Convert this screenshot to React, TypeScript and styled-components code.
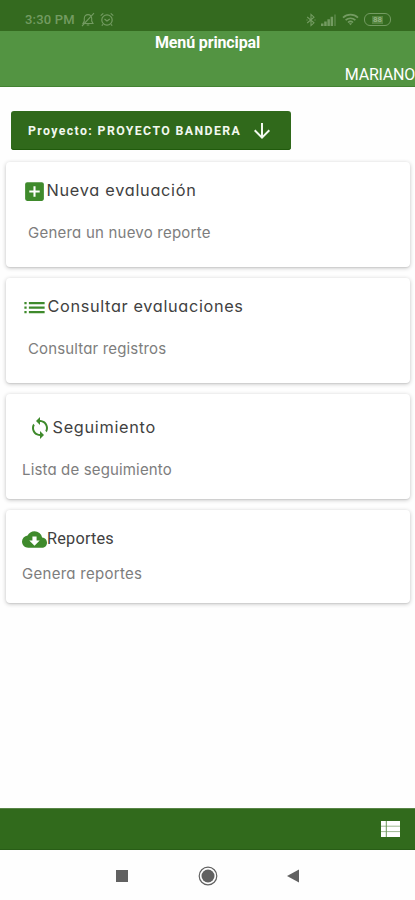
import React from "react";
import styled, { createGlobalStyle } from "styled-components";
import {
  MdAddBox,
  MdArrowDownward,
  MdCloudDownload,
  MdList,
  MdLoop,
} from "react-icons/md";

const GlobalStyle = createGlobalStyle`
  * { box-sizing: border-box; }
  body { margin: 0; background: #fefefe; }
`;

const Screen = styled.div`
  display: flex;
  flex-direction: column;
  width: 415px;
  height: 900px;
  overflow: hidden;
  background: #fefefe;
  font-family: Roboto, sans-serif;
`;

const StatusBar = styled.div`
  display: flex;
  justify-content: space-between;
  height: 31px;
  padding: 9px 24px 0 25px;
  background: #346a1f;
  color: #739b61;
`;

const StatusGroup = styled.div<{ $gap: number }>`
  display: flex;
  align-items: center;
  gap: ${(p) => p.$gap}px;
  height: 21px;
  svg { display: block; }
`;

const Clock = styled.span`
  font-size: 13px;
  line-height: 20px;
  font-weight: 500;
  letter-spacing: 0.2px;
  margin-right: 1px;
`;

const Header = styled.header`
  display: flex;
  flex-direction: column;
  justify-content: space-between;
  height: 56px;
  padding: 2px 0 1px;
  background: #539442;
  border-bottom: 1px solid #438232;
  color: #fff;
`;

const Title = styled.h1`
  margin: 0;
  font-size: 16px;
  line-height: 20px;
  font-weight: 700;
  letter-spacing: -0.13px;
  text-align: center;
`;

const UserName = styled.div`
  font-size: 16px;
  line-height: 20px;
  letter-spacing: -0.22px;
  text-align: right;
`;

const Content = styled.main`
  display: flex;
  flex: 1;
  flex-direction: column;
  align-items: flex-start;
  padding: 24px 5px 0 6px;
`;

const ProjectButton = styled.button`
  display: flex;
  align-items: center;
  justify-content: space-between;
  width: 280px;
  height: 39px;
  margin: 0 0 12px 5px;
  padding: 1px 17px 0 17px;
  border: 0;
  border-radius: 3px;
  background: #30691b;
  box-shadow: inset 0 -1px 0 #205a0c;
  color: #f2f8ef;
  font: 700 12.3px/20px Roboto, sans-serif;
  letter-spacing: 1.39px;
  white-space: nowrap;
`;

const CardList = styled.div`
  display: flex;
  flex-direction: column;
  gap: 11px;
  width: 100%;
`;

const Card = styled.section<{ $height: number }>`
  height: ${(p) => p.$height}px;
  border-radius: 4px;
  background: #fff;
  box-shadow: 0 1px 4px rgba(0, 0, 0, 0.24), 0 1px 1px rgba(0, 0, 0, 0.06);
`;

const CardHeading = styled.div<{ $top: number; $left: number; $gap: number }>`
  display: flex;
  align-items: center;
  gap: ${(p) => p.$gap}px;
  padding: ${(p) => p.$top}px 0 0 ${(p) => p.$left}px;
  height: ${(p) => p.$top + 24}px;
  svg { flex: none; color: #3f8a2c; }
`;

const CardTitle = styled.h2<{ $spacing: number; $roboto?: boolean }>`
  margin: ${(p) => (p.$roboto ? 0 : -2)}px 0 0 ${(p) => p.$roboto ? 0 : -0.5}px;
  color: #414141;
  font: 400 16.3px/24px ${(p) => (p.$roboto ? "Roboto" : "Inter")}, sans-serif;
  font-feature-settings: "cv11";
  letter-spacing: ${(p) => p.$spacing}px;
  white-space: nowrap;
`;

const CardText = styled.p<{ $top: number; $left: number; $spacing: number }>`
  margin: ${(p) => p.$top}px 0 0 ${(p) => p.$left}px;
  color: #7d7d7d;
  font: 400 15px/22px Inter, sans-serif;
  font-feature-settings: "cv11";
  letter-spacing: ${(p) => p.$spacing}px;
  white-space: nowrap;
`;

const BottomBar = styled.footer`
  display: flex;
  align-items: center;
  justify-content: flex-end;
  height: 42px;
  padding-right: 15px;
  background: #316a1c;
  border-top: 1px solid #588447;
  border-bottom: 1px solid #285d16;
  color: #fff;
`;

const NavBar = styled.nav`
  display: flex;
  align-items: center;
  justify-content: space-between;
  height: 50px;
  padding: 1px 115px 0;
  background: #fefefe;
  color: #616161;
  svg { display: block; }
`;

const MutedBell = () => (
  <svg width="14" height="15" viewBox="0 0 14 15" fill="none" stroke="currentColor" strokeWidth="1.1">
    <path d="M2 11.5h10L10.7 9V6.5C10.7 4 9.2 2.6 7 2.6S3.3 4 3.3 6.5V9L2 11.5zM5.7 13h2.6M1 14 13 1.2" />
  </svg>
);

const AlarmClock = () => (
  <svg width="14" height="15" viewBox="0 0 14 15" fill="none" stroke="currentColor" strokeWidth="1.2">
    <circle cx="7" cy="8" r="5.2" />
    <path d="M4.5 7 7 9l2.8-2M.7 3.6 3.3 1.4M13.3 3.6l-2.6-2.2M3 12.3l-1.2 1.4M11 12.3l1.2 1.4" />
  </svg>
);

const Bluetooth = () => (
  <svg width="10" height="14" viewBox="0 0 10 14" fill="none" stroke="currentColor" strokeWidth="1.1">
    <path d="M1.2 4 8 9.8 5 12.6V1.4L8 4.2 1.2 10" />
    <path d="M.5 7h1M8.5 7h1" />
  </svg>
);

const Signal = () => (
  <svg width="16" height="12" viewBox="0 0 16 12" fill="currentColor">
    <path d="M0 9.5h2.5V12H0zM3.2 7.5h2.5V12H3.2zM6.4 5.2h2.5V12H6.4zM9.6 2.8h2.5V12H9.6z" />
    <path d="M13 .5h2V12h-2z" opacity=".45" />
  </svg>
);

const Wifi = () => (
  <svg width="17" height="13" viewBox="0 0 17 13" fill="none" stroke="currentColor" strokeWidth="1.7">
    <path d="M1 4.6C5.2.7 11.8.7 16 4.6M3.6 7.2c2.8-2.6 7-2.6 9.8 0M6 9.5c1.4-1.3 3.6-1.3 5 0" />
    <path d="m6.8 10.3 1.7 2 1.7-2z" fill="currentColor" stroke="none" />
  </svg>
);

const ListIcon = () => (
  <svg width="19" height="16" viewBox="0 0 19 16">
    <path d="M0 0h19v16H0z" fill="#fff" />
    <path d="M0 5.2h19M0 10.6h19" stroke="#9db892" strokeWidth="1" />
    <path d="M5.3 0v16" stroke="#6b9659" strokeWidth="1" />
  </svg>
);

const BatteryShell = styled.span`
  display: flex;
  align-items: center;
  justify-content: center;
  width: 27px;
  height: 13px;
  border: 1px solid currentColor;
  border-radius: 6px;
`;

const BatteryLevel = styled.span`
  display: block;
  padding: 0 1px;
  background: #55863f;
  color: #92b281;
  font: 700 8px/8px Roboto, sans-serif;
`;

const cards = [
  {
    height: 105, icon: <MdAddBox size={25} />, top: 17, left: 16, gap: 0,
    title: "Nueva evaluación", spacing: 0.72,
    text: "Genera un nuevo reporte", textTop: 19, textLeft: 22, textSpacing: 0.22,
  },
  {
    height: 105, icon: <MdList size={27} />, top: 17, left: 15, gap: -1,
    title: "Consultar evaluaciones", spacing: 0.65,
    text: "Consultar registros", textTop: 19, textLeft: 22, textSpacing: 0.15,
  },
  {
    height: 105, icon: <MdLoop size={24} />, top: 22, left: 22, gap: 1,
    title: "Seguimiento", spacing: 0.7,
    text: "Lista de seguimiento", textTop: 19, textLeft: 16, textSpacing: 0.15,
  },
  {
    height: 93, icon: <MdCloudDownload size={25} />, top: 17, left: 16, gap: 0,
    title: "Reportes", spacing: 0.2, roboto: true,
    text: "Genera reportes", textTop: 12, textLeft: 16, textSpacing: 0.28,
  },
];

export default function App() {
  return (
    <Screen>
      <GlobalStyle />
      <StatusBar>
        <StatusGroup $gap={5}>
          <Clock>3:30 PM</Clock>
          <MutedBell />
          <AlarmClock />
        </StatusGroup>
        <StatusGroup $gap={5}>
          <Bluetooth />
          <Signal />
          <Wifi />
          <BatteryShell>
            <BatteryLevel>88</BatteryLevel>
          </BatteryShell>
        </StatusGroup>
      </StatusBar>
      <Header>
        <Title>Menú principal</Title>
        <UserName>MARIANO</UserName>
      </Header>
      <Content>
        <ProjectButton>
          Proyecto: PROYECTO BANDERA
          <MdArrowDownward size={24} />
        </ProjectButton>
        <CardList>
          {cards.map((c) => (
            <Card key={c.title} $height={c.height}>
              <CardHeading $top={c.top} $left={c.left} $gap={c.gap}>
                {c.icon}
                <CardTitle $spacing={c.spacing} $roboto={c.roboto}>{c.title}</CardTitle>
              </CardHeading>
              <CardText $top={c.textTop} $left={c.textLeft} $spacing={c.textSpacing}>{c.text}</CardText>
            </Card>
          ))}
        </CardList>
      </Content>
      <BottomBar>
        <ListIcon />
      </BottomBar>
      <NavBar>
        <svg width="14" height="14" viewBox="0 0 14 14">
          <path d="M1 1h12v12H1z" fill="currentColor" />
        </svg>
        <svg width="20" height="20" viewBox="0 0 20 20">
          <circle cx="10" cy="10" r="8.8" fill="none" stroke="currentColor" strokeWidth="1.2" />
          <circle cx="10" cy="10" r="6.5" fill="currentColor" />
        </svg>
        <svg width="14" height="14" viewBox="0 0 14 14">
          <path d="M13 .5v13L1 7z" fill="currentColor" />
        </svg>
      </NavBar>
    </Screen>
  );
}
